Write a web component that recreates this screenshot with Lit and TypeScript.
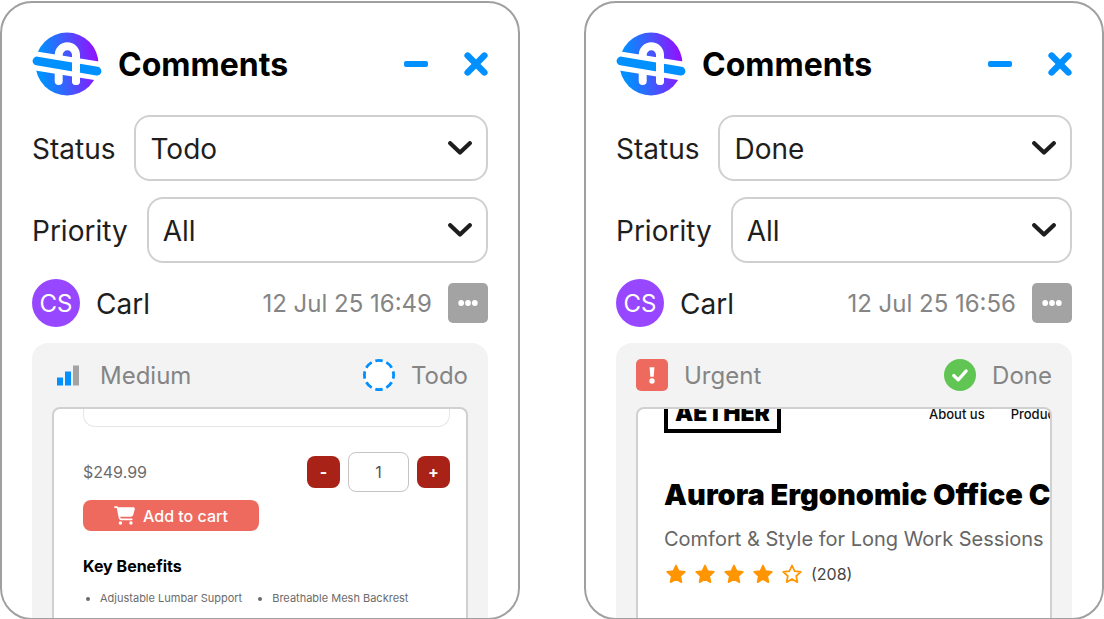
import { LitElement, html, css, svg, nothing } from "lit";
import { customElement, property } from "lit/decorators.js";

interface CommentEntry {
  status: "Todo" | "Done";
  priority: "Medium" | "Urgent";
  author: string;
  initials: string;
  date: string;
}

const entries: CommentEntry[] = [
  { status: "Todo", priority: "Medium", author: "Carl", initials: "CS", date: "12 Jul 25 16:49" },
  { status: "Done", priority: "Urgent", author: "Carl", initials: "CS", date: "12 Jul 25 16:56" },
];

const logo = html`
  <svg class="logo" viewBox="0 0 70 70" width="70" height="70" aria-hidden="true">
    <defs>
      <linearGradient id="disc" x1="0.08" y1="0.4" x2="0.95" y2="0.3">
        <stop offset="0" stop-color="#0090ff" />
        <stop offset="0.5" stop-color="#4655ff" />
        <stop offset="1" stop-color="#9013ff" />
      </linearGradient>
    </defs>
    <circle cx="35" cy="35" r="31.5" fill="url(#disc)" />
    <path d="M-4 30.6L74 43.4" stroke="#fff" stroke-width="19" fill="none" />
    <path d="M26.7 52V26a8.65 8.65 0 0 1 17.3 0V52" stroke="#fff" stroke-width="8" stroke-linecap="round" fill="none" />
    <path d="M5 32L65 42.2" stroke="#0090ff" stroke-width="8.8" stroke-linecap="round" fill="none" />
    <path d="M44 27V52" stroke="#fff" stroke-width="8" stroke-linecap="round" fill="none" />
  </svg>
`;

const chevron = html`
  <svg class="chevron" viewBox="0 0 24 14" width="24" height="14" aria-hidden="true">
    <path d="M2.2 2.2L12 11.6L21.8 2.2" fill="none" stroke="#1e1e1e" stroke-width="4.2" stroke-linecap="round" stroke-linejoin="round" />
  </svg>
`;

const mediumIcon = html`
  <svg viewBox="0 0 32 32" width="32" height="32" aria-hidden="true">
    <path d="M5 18.500h6V26.500H5z" fill="#0090ff" />
    <path d="M13 12.500h6V26.500h-6z" fill="#0090ff" />
    <path d="M21 6.500h6V26.500h-6z" fill="#a3a3a3" />
  </svg>
`;

const urgentIcon = html`
  <svg viewBox="0 0 32 32" width="32" height="32" aria-hidden="true">
    <rect width="32" height="32" rx="5" fill="#ee6a5f" />
    <path d="M13.600 8.200h4.800l-.7 9.600h-3.400z" fill="#fff" />
    <circle cx="16" cy="22" r="2.700" fill="#fff" />
  </svg>
`;

const todoIcon = html`
  <svg viewBox="0 0 32 32" width="32" height="32" aria-hidden="true">
    <circle cx="16" cy="16" r="14.600" fill="#fff" stroke="#0090ff" stroke-width="2.800" pathLength="80"
      stroke-dasharray="6.600 3.400" stroke-dashoffset="3.300" />
  </svg>
`;

const doneIcon = html`
  <svg viewBox="0 0 32 32" width="32" height="32" aria-hidden="true">
    <circle cx="16" cy="16" r="16" fill="#61c554" />
    <path d="M9.700 16.500l4.500 4.400 8-9" fill="none" stroke="#fff" stroke-width="3.200" stroke-linecap="round" stroke-linejoin="round" />
  </svg>
`;

const base = css`
  *, *::before, *::after { box-sizing: border-box; }
  button, input, select { font: inherit; color: inherit; margin: 0; }
  button { border: 0; padding: 0; cursor: pointer; }
  svg { display: block; flex: none; }
  h1, h2, h3, p, ul { margin: 0; padding: 0; }
`;

@customElement("cart-preview")
export class CartPreview extends LitElement {
  static styles = [base, css`
    :host {
      display: block;
      padding: 0 16px 12px 29px;
      font-size: 16px;
      line-height: 20px;
      color: #6b6b6b;
      white-space: nowrap;
    }
    .frame { height: 18px; border: 1px solid #e6e6e6; border-top: 0; border-radius: 0 0 12px 12px; }
    .row { display: flex; align-items: center; margin-top: 25px; }
    .qty { display: flex; align-items: center; gap: 8px; margin-left: auto; }
    .step { width: 33px; height: 32px; border-radius: 8px; background: #a82218; color: #fff; font-weight: 700; }
    .count {
      width: 61px; height: 40px; border: 1px solid #c4c4c4; border-radius: 8px;
      background: #fff; color: #555; text-align: center; padding: 0;
    }
    .add {
      display: flex; align-items: center; justify-content: center; gap: 8px;
      width: 176px; height: 31px; margin-top: 8px; border-radius: 8px;
      background: #ee6a5f; color: #fff; font-weight: 500;
    }
    .heading { margin-top: 25px; font-size: 16px; font-weight: 700; color: #000; }
    .benefits { display: flex; gap: 30px; margin-top: 14px; padding-left: 17px; font-size: 11px; line-height: 16px; }
    .benefits li { list-style-position: outside; }
  `];

  render() {
    return html`
      <div class="frame"></div>
      <div class="row">
        <span>$249.99</span>
        <div class="qty">
          <button class="step" aria-label="Decrease quantity">-</button>
          <input class="count" type="text" inputmode="numeric" aria-label="Quantity" .value=${"1"} />
          <button class="step" aria-label="Increase quantity">+</button>
        </div>
      </div>
      <button class="add">
        <svg viewBox="0 0 576 512" width="21" height="19" aria-hidden="true">
          <path fill="#fff" d="M0 24C0 10.700 10.700 0 24 0h45.500c22 0 41.500 12.800 50.600 32h411c26.300 0 45.500 25 38.600 50.400l-41 152.300c-8.500 31.400-37 53.300-69.500 53.300H170.700l5.400 28.500c2.200 11.300 12.100 19.500 23.600 19.500H488c13.300 0 24 10.700 24 24s-10.700 24-24 24H199.700c-34.600 0-64.300-24.600-70.700-58.500L77.400 54.500c-.7-3.800-4-6.500-7.900-6.500H24C10.700 48 0 37.300 0 24zm128 440a48 48 0 1 1 96 0 48 48 0 1 1-96 0zm336-48a48 48 0 1 1 0 96 48 48 0 1 1 0-96z" />
        </svg>
        Add to cart
      </button>
      <h3 class="heading">Key Benefits</h3>
      <ul class="benefits">
        <li>Adjustable Lumbar Support</li>
        <li>Breathable Mesh Backrest</li>
      </ul>
    `;
  }
}

@customElement("product-preview")
export class ProductPreview extends LitElement {
  static styles = [base, css`
    :host { display: block; padding: 0 0 12px 26px; white-space: nowrap; color: #666; }
    .top { display: flex; height: 24px; overflow: hidden; }
    .brand {
      display: flex; align-items: flex-end; justify-content: center;
      width: 117px; height: 24px; flex: none;
      border: 4px solid #000; border-top: 0;
      font-size: 23px; line-height: 32px; font-weight: 900; color: #000;
    }
    .nav { display: flex; gap: 26px; margin-left: 148px; font-size: 13px; line-height: 10px; font-weight: 500; }
    .nav a { color: #111; text-decoration: none; }
    .title { margin-top: 44px; font-size: 29px; line-height: 36px; font-weight: 900; color: #000; }
    .tagline { margin-top: 14px; font-size: 20px; line-height: 24px; }
    .rating { display: flex; align-items: center; gap: 9px; margin-top: 11px; padding-left: 2px; font-size: 16px; line-height: 24px; color: #444; }
  `];

  private star(filled: boolean) {
    return html`
      <svg viewBox="0 0 20 20" width="20" height="20" aria-hidden="true">
        ${svg`<path d="M10 1.500L12.600 7.100L18.800 7.800L14.200 12L15.400 18.200L10 15.100L4.600 18.200L5.800 12L1.200 7.800L7.400 7.100Z"
          fill=${filled ? "#ff9500" : "none"} stroke="#ff9500" stroke-width="1.700" stroke-linejoin="round" />`}
      </svg>`;
  }

  render() {
    return html`
      <div class="top">
        <div class="brand">AETHER</div>
        <nav class="nav"><a href="#about">About us</a><a href="#products">Products</a></nav>
      </div>
      <h3 class="title">Aurora Ergonomic Office Chair</h3>
      <p class="tagline">Comfort &amp; Style for Long Work Sessions</p>
      <div class="rating">
        ${[1, 2, 3, 4, 5].map((n) => this.star(n <= 4))}
        <span>(208)</span>
      </div>
    `;
  }
}

@customElement("comments-panel")
export class CommentsPanel extends LitElement {
  @property({ attribute: false }) entry!: CommentEntry;

  static styles = [base, css`
    :host {
      display: flex; flex-direction: column; gap: 16px; min-width: 0;
      padding: 26px 30px 0; border: 2px solid #a0a0a0; border-radius: 32px;
      background: #fff; overflow: hidden; color: #1e1e1e;
      font-size: 28px; line-height: 36px;
    }
    .header { display: flex; align-items: center; }
    .title { margin-left: 16px; padding-top: 2px; font-size: 32px; line-height: 40px; font-weight: 700; color: #000; }
    .actions { display: flex; gap: 36px; margin-left: auto; }
    .icon { display: grid; place-items: center; width: 24px; height: 24px; background: none; }
    .field { display: flex; align-items: center; gap: 19px; }
    .field label { padding-top: 2px; }
    .control { display: grid; flex: 1; min-width: 0; align-items: center; }
    .select {
      grid-area: 1 / 1; width: 100%; height: 66px; padding: 2px 48px 0 14px;
      appearance: none; border: 2px solid #d0d0d0; border-radius: 16px; background: #fff;
    }
    .chevron { grid-area: 1 / 1; justify-self: end; margin-right: 16px; pointer-events: none; }
    .byline { display: flex; align-items: center; gap: 16px; }
    .avatar {
      display: grid; place-items: center; width: 48px; height: 48px; padding-top: 2px; border-radius: 50%;
      background: #9747ff; color: #fff; font-size: 24px;
    }
    .author { padding-top: 2px; }
    .date { margin-left: auto; padding-top: 2px; font-size: 24px; color: #858585; }
    .more { display: grid; place-items: center; width: 40px; height: 40px; border-radius: 5px; background: #a3a3a3; }
    .card {
      display: flex; flex: 1; flex-direction: column; gap: 16px;
      padding: 16px 20px 0; border-radius: 16px 16px 0 0; background: #f3f3f3;
      font-size: 24px; color: #858585;
    }
    .meta { display: flex; justify-content: space-between; height: 32px; line-height: 32px; }
    .tag { display: flex; align-items: center; gap: 16px; }
    .tag span { padding-top: 2px; }
    .preview {
      flex: 1; border: 2px solid #d0d0d0; border-bottom: 0; border-radius: 8px 8px 0 0;
      background: #fff; overflow: hidden;
    }
  `];

  private field(label: string, value: string, options: string[]) {
    const id = label.toLowerCase();
    return html`
      <div class="field">
        <label for=${id}>${label}</label>
        <div class="control">
          <select class="select" id=${id}>
            ${options.map((o) => html`<option ?selected=${o === value}>${o}</option>`)}
          </select>
          ${chevron}
        </div>
      </div>
    `;
  }

  render() {
    const e = this.entry;
    if (!e) return nothing;
    return html`
      <header class="header">
        ${logo}
        <h2 class="title">Comments</h2>
        <div class="actions">
          <button class="icon" aria-label="Minimise">
            <svg viewBox="0 0 24 24" width="24" height="24"><rect y="9" width="24" height="6" rx="2" fill="#0090ff" /></svg>
          </button>
          <button class="icon" aria-label="Close">
            <svg viewBox="0 0 24 24" width="24" height="24">
              <path d="M3.600 3.600L20.400 20.400M20.400 3.600L3.600 20.400" stroke="#0090ff" stroke-width="6.400" stroke-linecap="round" />
            </svg>
          </button>
        </div>
      </header>
      ${this.field("Status", e.status, ["Todo", "Done"])}
      ${this.field("Priority", "All", ["All", "Medium", "Urgent"])}
      <div class="byline">
        <span class="avatar">${e.initials}</span>
        <span class="author">${e.author}</span>
        <time class="date">${e.date}</time>
        <button class="more" aria-label="More options">
          <svg viewBox="0 0 20 6" width="20" height="6">
            <circle cx="3.200" cy="3" r="2.900" fill="#fff" /><circle cx="10" cy="3" r="2.900" fill="#fff" /><circle cx="16.800" cy="3" r="2.900" fill="#fff" />
          </svg>
        </button>
      </div>
      <article class="card">
        <div class="meta">
          <span class="tag">${e.priority === "Medium" ? mediumIcon : urgentIcon}<span>${e.priority}</span></span>
          <span class="tag">${e.status === "Todo" ? todoIcon : doneIcon}<span>${e.status}</span></span>
        </div>
        <div class="preview">
          ${e.status === "Todo" ? html`<cart-preview></cart-preview>` : html`<product-preview></product-preview>`}
        </div>
      </article>
    `;
  }
}

@customElement("app-root")
export class AppRoot extends LitElement {
  static styles = css`
    :host {
      box-sizing: border-box;
      display: grid;
      grid-template-columns: repeat(2, minmax(0, 1fr));
      gap: 64px;
      min-height: 100vh;
      padding-top: 1px;
      background: #fff;
      font-family: Inter, "Liberation Sans", sans-serif;
    }
  `;

  render() {
    return entries.map((entry) => html`<comments-panel .entry=${entry}></comments-panel>`);
  }
}
